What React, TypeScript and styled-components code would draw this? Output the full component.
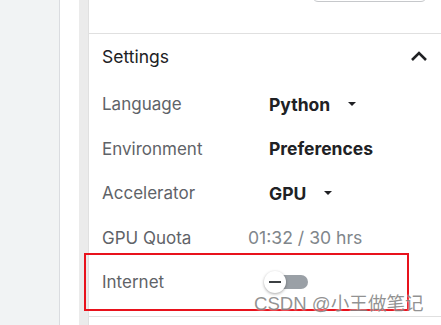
import React from 'react';
import styled, { createGlobalStyle } from 'styled-components';

const GlobalStyle = createGlobalStyle`
  html, body {
    margin: 0;
    padding: 0;
    background: #ffffff;
  }
  body {
    font-family: Inter, "Noto Sans", "Noto Sans CJK SC", sans-serif;
    -webkit-font-smoothing: antialiased;
  }
`;

const Page = styled.div`
  position: relative;
  display: flex;
  width: 441px;
  height: 325px;
  overflow: hidden;
`;

const LeftRail = styled.div`
  width: 59px;
  background: #f1f3f4;
  border-right: 1px solid #dadce0;
`;

const Gutter = styled.div`
  width: 19px;
`;

const Strip = styled.div`
  width: 9px;
  background: #ebebeb;
  border-right: 1px solid #e0e0e0;
`;

const Panel = styled.div`
  flex: 1;
  display: flex;
  flex-direction: column;
`;

const TopArea = styled.div`
  height: 33px;
  border-bottom: 1px solid #e0e0e0;
  display: flex;
`;

const TopButton = styled.div`
  margin: -30px 0 0 223px;
  width: 113px;
  height: 30px;
  border: 1px solid #c6c8cb;
  border-radius: 6px;
`;

const Header = styled.div`
  height: 44px;
  margin-bottom: 4px;
  display: flex;
  align-items: center;
  justify-content: space-between;
  padding: 0 13px;
  font-size: 17.5px;
  color: #202124;
`;

const Row = styled.div`
  position: relative;
  height: 44.5px;
  display: flex;
  align-items: center;
  padding-left: 13px;
`;

const Label = styled.div`
  width: 167px;
  font-size: 17px;
  color: #5f6368;
`;

const Value = styled.div<{ $muted?: boolean; $shift?: number }>`
  display: flex;
  align-items: center;
  margin-left: ${(p) => p.$shift ?? 0}px;
  font-size: ${(p) => (p.$muted ? 17.6 : 17.5)}px;
  font-weight: ${(p) => (p.$muted ? 400 : 700)};
  color: ${(p) => (p.$muted ? '#80868b' : '#202124')};
`;

const Caret = styled.span`
  margin-left: 18px;
  width: 0;
  height: 0;
  border-left: 4px solid transparent;
  border-right: 4px solid transparent;
  border-top: 4px solid #202124;
`;

const Toggle = styled.div`
  position: relative;
  width: 41px;
  height: 14px;
  margin-left: -2px;
  border-radius: 7px;
  background: #9aa0a6;
`;

const Knob = styled.div`
  position: absolute;
  left: -3px;
  top: -4px;
  width: 22px;
  height: 22px;
  border-radius: 50%;
  background: #ffffff;
  box-shadow: 0 1px 3px rgba(0, 0, 0, 0.35);
  display: flex;
  align-items: center;
  justify-content: center;

  &::after {
    content: '';
    width: 12px;
    height: 2px;
    background: #3c4043;
  }
`;

const Highlight = styled.div`
  position: absolute;
  left: -5px;
  top: -7px;
  width: 321px;
  height: 54px;
  border: 2px solid #e8121c;
  pointer-events: none;
`;

const Footer = styled.div`
  margin-top: 11px;
  border-top: 1px solid #e0e0e0;
`;

const Watermark = styled.div`
  position: absolute;
  left: 254px;
  top: 293px;
  font-family: "Liberation Sans", "Noto Sans CJK SC", sans-serif;
  font-size: 18.6px;
  line-height: 22px;
  color: rgba(110, 110, 110, 0.75);
  text-shadow: 0 0 2px #ffffff;
  white-space: nowrap;
`;

function ChevronUp() {
  return (
    <svg width="18" height="12" viewBox="0 0 18 12">
      <path d="M2 10 L9 3 L16 10" fill="none" stroke="#202124" strokeWidth="2.6" />
    </svg>
  );
}

export default function App() {
  return (
    <>
      <GlobalStyle />
      <Page>
        <LeftRail />
        <Gutter />
        <Strip />
        <Panel>
          <TopArea>
            <TopButton />
          </TopArea>
          <Header>
            <span>Settings</span>
            <ChevronUp />
          </Header>
          <Row>
            <Label>Language</Label>
            <Value>Python<Caret /></Value>
          </Row>
          <Row>
            <Label>Environment</Label>
            <Value>Preferences</Value>
          </Row>
          <Row>
            <Label>Accelerator</Label>
            <Value>GPU<Caret /></Value>
          </Row>
          <Row>
            <Label>GPU Quota</Label>
            <Value $muted $shift={-21}>01:32 / 30 hrs</Value>
          </Row>
          <Row>
            <Label>Internet</Label>
            <Toggle><Knob /></Toggle>
            <Highlight />
          </Row>
          <Footer />
        </Panel>
        <Watermark>CSDN @小王做笔记</Watermark>
      </Page>
    </>
  );
}
